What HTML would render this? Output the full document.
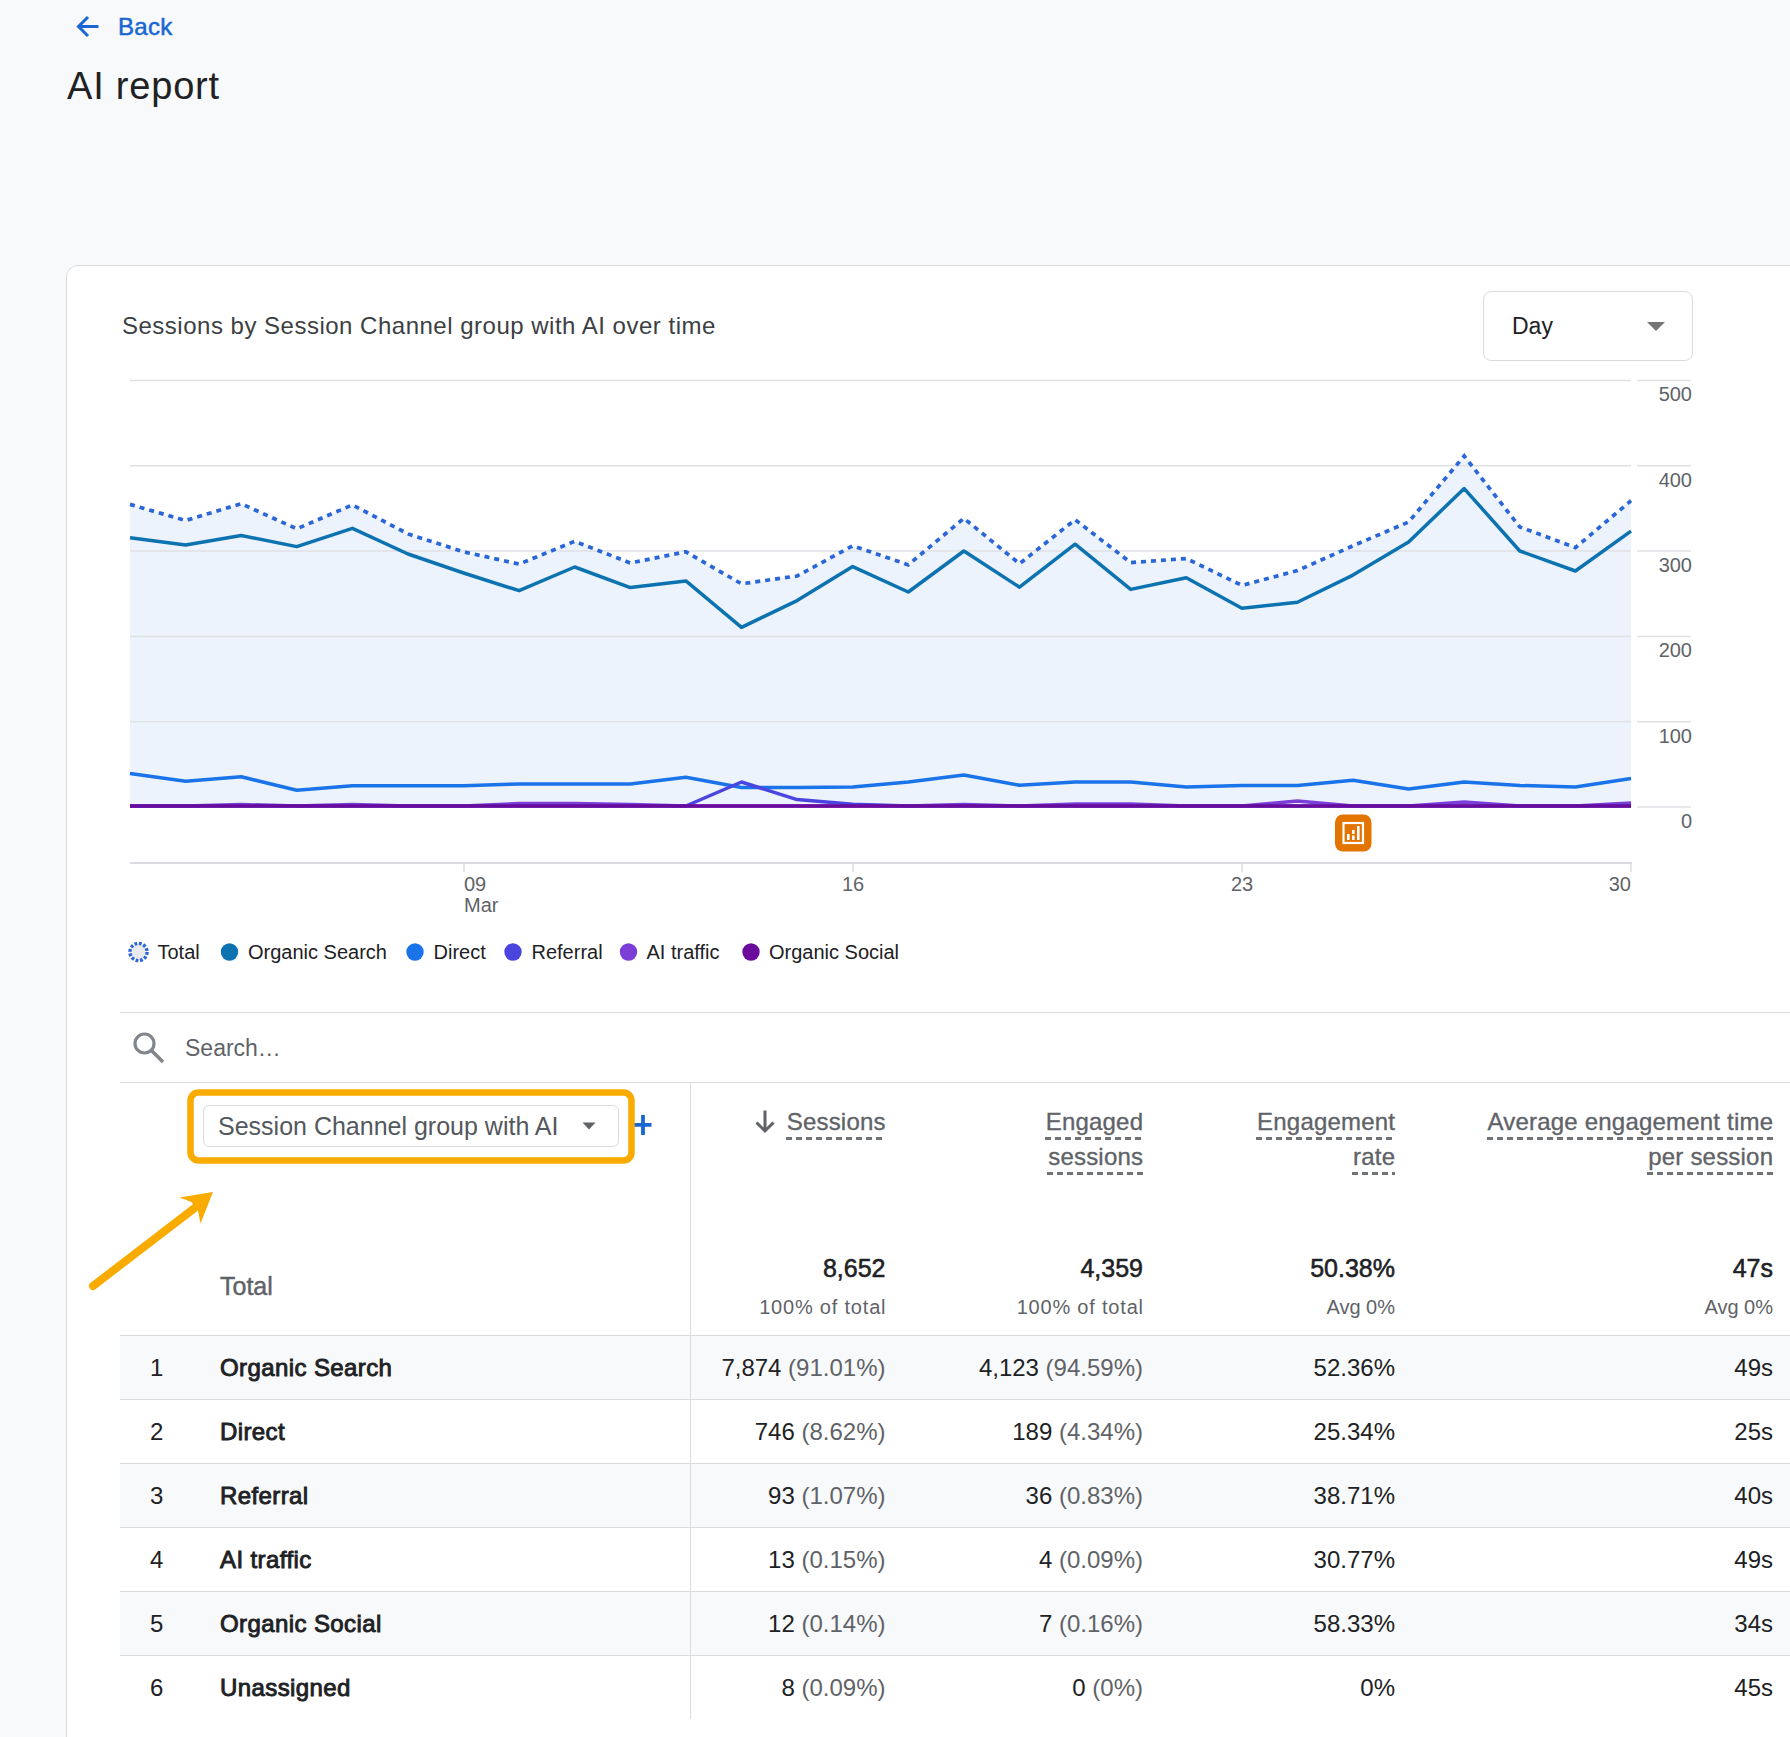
<!DOCTYPE html>
<html><head><meta charset="utf-8">
<style>
html,body{margin:0;padding:0;}
body{width:1790px;height:1737px;overflow:hidden;position:relative;background:#f8f9fa;font-family:"Liberation Sans", sans-serif;}
.t{position:absolute;line-height:1;white-space:nowrap;}
.abs{position:absolute;}
.u{border-bottom:2px dashed #80868b;}
</style></head><body>
<div class="abs" style="left:66px;top:265px;width:1800px;height:1600px;background:#fff;border:1px solid #dadce0;border-radius:12px;box-sizing:border-box;"></div>
<div class="t" style="top:14.7px;font-size:24px;color:#1967d2;font-weight:400;-webkit-text-stroke:0.5px #1967d2;letter-spacing:0.3px;left:118px;">Back</div>
<div class="t" style="top:66.8px;font-size:38px;color:#202124;font-weight:400;letter-spacing:0.8px;left:67px;">AI report</div>
<div class="t" style="top:313.7px;font-size:24px;color:#3c4043;font-weight:400;letter-spacing:0.5px;left:122px;">Sessions by Session Channel group with AI over time</div>
<div class="abs" style="left:1483px;top:291px;width:210px;height:70px;border:1px solid #dadce0;border-radius:8px;box-sizing:border-box;background:#fff;"></div>
<div class="t" style="top:314.5px;font-size:23px;color:#202124;font-weight:400;left:1512px;">Day</div>
<svg class="abs" style="left:0;top:0" width="1790" height="1737" viewBox="0 0 1790 1737">
<polygon points="130.0,807 130.0,504.4 185.6,520.5 241.2,503.7 296.8,528.8 352.4,504.9 408.0,533.9 463.6,551.8 519.1,564.1 574.7,541.3 630.3,563.0 685.9,551.8 741.5,583.8 797.1,576.0 852.7,545.8 908.3,564.8 963.9,518.3 1019.5,563.7 1075.1,519.7 1130.7,562.6 1186.3,558.5 1241.9,585.4 1297.4,570.6 1353.0,545.8 1408.6,522.0 1464.2,456.0 1519.8,527.0 1575.4,547.6 1631.0,500.7 1631.0,807" fill="#edf3fd"/>
<line x1="130" y1="380.5" x2="1631" y2="380.5" stroke="#dfe1e5" stroke-width="1.5"/>
<line x1="1637" y1="380.5" x2="1691" y2="380.5" stroke="#dfe1e5" stroke-width="1.5"/>
<line x1="130" y1="465.8" x2="1631" y2="465.8" stroke="#dfe1e5" stroke-width="1.5"/>
<line x1="1637" y1="465.8" x2="1691" y2="465.8" stroke="#dfe1e5" stroke-width="1.5"/>
<line x1="130" y1="551.1" x2="1631" y2="551.1" stroke="#dfe1e5" stroke-width="1.5"/>
<line x1="1637" y1="551.1" x2="1691" y2="551.1" stroke="#dfe1e5" stroke-width="1.5"/>
<line x1="130" y1="636.4" x2="1631" y2="636.4" stroke="#dfe1e5" stroke-width="1.5"/>
<line x1="1637" y1="636.4" x2="1691" y2="636.4" stroke="#dfe1e5" stroke-width="1.5"/>
<line x1="130" y1="721.7" x2="1631" y2="721.7" stroke="#dfe1e5" stroke-width="1.5"/>
<line x1="1637" y1="721.7" x2="1691" y2="721.7" stroke="#dfe1e5" stroke-width="1.5"/>
<line x1="130" y1="807.0" x2="1631" y2="807.0" stroke="#dfe1e5" stroke-width="1.5"/>
<line x1="1637" y1="807.0" x2="1691" y2="807.0" stroke="#dfe1e5" stroke-width="1.5"/>
<line x1="130" y1="863" x2="1632" y2="863" stroke="#dadce0" stroke-width="2"/>
<line x1="464" y1="863" x2="464" y2="872" stroke="#dadce0" stroke-width="1.5"/>
<line x1="853" y1="863" x2="853" y2="872" stroke="#dadce0" stroke-width="1.5"/>
<line x1="1242" y1="863" x2="1242" y2="872" stroke="#dadce0" stroke-width="1.5"/>
<line x1="1631" y1="863" x2="1631" y2="872" stroke="#dadce0" stroke-width="1.5"/>
<polyline points="130.0,773.5 185.6,781.3 241.2,776.8 296.8,790.2 352.4,785.8 408.0,785.8 463.6,785.8 519.1,784.0 574.7,784.0 630.3,784.0 685.9,777.3 741.5,787.5 797.1,787.5 852.7,786.9 908.3,782.0 963.9,775.0 1019.5,785.3 1075.1,782.0 1130.7,782.0 1186.3,786.9 1241.9,785.5 1297.4,785.5 1353.0,780.2 1408.6,789.0 1464.2,782.0 1519.8,785.5 1575.4,787.1 1631.0,778.6" fill="none" stroke="#1a73e8" stroke-width="3.5" stroke-linejoin="round"/>
<polyline points="130.0,806.0 185.6,806.0 241.2,804.5 296.8,806.0 352.4,804.5 408.0,806.0 463.6,806.0 519.1,803.5 574.7,803.5 630.3,804.5 685.9,806.0 741.5,806.0 797.1,806.0 852.7,806.0 908.3,806.0 963.9,804.5 1019.5,806.0 1075.1,804.0 1130.7,804.0 1186.3,806.0 1241.9,806.0 1297.4,801.0 1353.0,806.0 1408.6,806.0 1464.2,802.0 1519.8,806.0 1575.4,806.0 1631.0,803.0" fill="none" stroke="#7b3fd8" stroke-width="3.5" stroke-linejoin="round"/>
<polyline points="130.0,806.0 185.6,806.0 241.2,806.0 296.8,806.0 352.4,806.0 408.0,806.0 463.6,806.0 519.1,806.0 574.7,806.0 630.3,806.0 685.9,806.0 741.5,782.0 797.1,799.6 852.7,804.3 908.3,806.0 963.9,806.0 1019.5,806.0 1075.1,806.0 1130.7,806.0 1186.3,806.0 1241.9,806.0 1297.4,806.0 1353.0,806.0 1408.6,806.0 1464.2,806.0 1519.8,806.0 1575.4,806.0 1631.0,806.0" fill="none" stroke="#4b45e0" stroke-width="3.5" stroke-linejoin="round"/>
<polyline points="130.0,806.0 185.6,806.0 241.2,806.0 296.8,806.0 352.4,806.0 408.0,806.0 463.6,806.0 519.1,806.0 574.7,806.0 630.3,806.0 685.9,806.0 741.5,806.0 797.1,806.0 852.7,806.0 908.3,806.0 963.9,806.0 1019.5,806.0 1075.1,806.0 1130.7,806.0 1186.3,806.0 1241.9,806.0 1297.4,806.0 1353.0,806.0 1408.6,806.0 1464.2,806.0 1519.8,806.0 1575.4,806.0 1631.0,806.0" fill="none" stroke="#6a0b9c" stroke-width="3.5" stroke-linejoin="round"/>
<polyline points="130.0,537.7 185.6,545.0 241.2,535.5 296.8,546.6 352.4,528.3 408.0,554.0 463.6,573.0 519.1,590.7 574.7,567.0 630.3,587.6 685.9,580.9 741.5,627.4 797.1,600.6 852.7,566.6 908.3,592.0 963.9,551.0 1019.5,587.2 1075.1,544.2 1130.7,589.4 1186.3,577.8 1241.9,608.3 1297.4,602.2 1353.0,575.1 1408.6,541.9 1464.2,488.6 1519.8,551.0 1575.4,571.0 1631.0,531.2" fill="none" stroke="#0c73b0" stroke-width="3.5" stroke-linejoin="round"/>
<polyline points="130.0,504.4 185.6,520.5 241.2,503.7 296.8,528.8 352.4,504.9 408.0,533.9 463.6,551.8 519.1,564.1 574.7,541.3 630.3,563.0 685.9,551.8 741.5,583.8 797.1,576.0 852.7,545.8 908.3,564.8 963.9,518.3 1019.5,563.7 1075.1,519.7 1130.7,562.6 1186.3,558.5 1241.9,585.4 1297.4,570.6 1353.0,545.8 1408.6,522.0 1464.2,456.0 1519.8,527.0 1575.4,547.6 1631.0,500.7" fill="none" stroke="#2a66d8" stroke-width="3.7" stroke-dasharray="5 5"/>
<rect x="1335" y="814.5" width="36.5" height="37" rx="8" fill="#e37400"/>
<rect x="1343.5" y="823" width="19.5" height="20" fill="none" stroke="#fff" stroke-width="2.2"/>
<rect x="1347" y="834" width="2.6" height="6" fill="#fff"/>
<rect x="1352" y="830" width="2.6" height="4" fill="#fff"/>
<rect x="1352" y="835.5" width="2.6" height="4.5" fill="#fff"/>
<rect x="1357" y="826" width="2.6" height="14" fill="#fff"/>
<circle cx="138.5" cy="952" r="8.6" fill="#e8eaed" stroke="#2a66d8" stroke-width="3.4" stroke-dasharray="2.8 1.72"/>
<circle cx="229.5" cy="952" r="8.7" fill="#0c73b0"/>
<circle cx="415" cy="952" r="8.7" fill="#1a73e8"/>
<circle cx="513" cy="952" r="8.7" fill="#4b45e0"/>
<circle cx="628.5" cy="952" r="8.7" fill="#7b3fd8"/>
<circle cx="751" cy="952" r="8.7" fill="#6a0b9c"/>
<path d="M98.5 26.5 H80 M88 17 L78.5 26.5 L88 36" stroke="#1967d2" stroke-width="3" fill="none"/>
</svg>
<div class="t" style="top:384.1px;font-size:20px;color:#5f6368;font-weight:400;right:98.0px;text-align:right;">500</div>
<div class="t" style="top:469.5px;font-size:20px;color:#5f6368;font-weight:400;right:98.0px;text-align:right;">400</div>
<div class="t" style="top:554.9px;font-size:20px;color:#5f6368;font-weight:400;right:98.0px;text-align:right;">300</div>
<div class="t" style="top:640.3px;font-size:20px;color:#5f6368;font-weight:400;right:98.0px;text-align:right;">200</div>
<div class="t" style="top:725.7px;font-size:20px;color:#5f6368;font-weight:400;right:98.0px;text-align:right;">100</div>
<div class="t" style="top:811.1px;font-size:20px;color:#5f6368;font-weight:400;right:98.0px;text-align:right;">0</div>
<div class="t" style="top:874.1px;font-size:20px;color:#5f6368;font-weight:400;left:464px;">09</div>
<div class="t" style="top:895.1px;font-size:20px;color:#5f6368;font-weight:400;left:464px;">Mar</div>
<div class="t" style="top:874.1px;font-size:20px;color:#5f6368;font-weight:400;left:842px;">16</div>
<div class="t" style="top:874.1px;font-size:20px;color:#5f6368;font-weight:400;left:1231px;">23</div>
<div class="t" style="top:874.1px;font-size:20px;color:#5f6368;font-weight:400;right:159.0px;text-align:right;">30</div>
<div class="t" style="top:942.1px;font-size:20px;color:#202124;font-weight:400;left:157.5px;">Total</div>
<div class="t" style="top:942.1px;font-size:20px;color:#202124;font-weight:400;left:248px;">Organic Search</div>
<div class="t" style="top:942.1px;font-size:20px;color:#202124;font-weight:400;left:433.5px;">Direct</div>
<div class="t" style="top:942.1px;font-size:20px;color:#202124;font-weight:400;left:531.5px;">Referral</div>
<div class="t" style="top:942.1px;font-size:20px;color:#202124;font-weight:400;left:646.5px;">AI traffic</div>
<div class="t" style="top:942.1px;font-size:20px;color:#202124;font-weight:400;left:769px;">Organic Social</div>
<div class="abs" style="left:120px;top:1012px;width:1700px;height:1px;background:#dadce0"></div>
<svg class="abs" style="left:125px;top:1025px" width="45" height="45" viewBox="0 0 45 45"><circle cx="19.5" cy="18.5" r="9.5" fill="none" stroke="#80868b" stroke-width="3.2"/><line x1="26.5" y1="25.5" x2="38" y2="37" stroke="#80868b" stroke-width="3.6"/></svg>
<div class="t" style="top:1036.5px;font-size:23px;color:#5f6368;font-weight:400;left:185px;">Search…</div>
<div class="abs" style="left:120px;top:1082px;width:1700px;height:1px;background:#dadce0"></div>
<div class="abs" style="left:120px;top:1335px;width:1700px;height:1px;background:#dadce0"></div>
<div class="abs" style="left:120px;top:1336px;width:1700px;height:63px;background:#f8f9fa"></div>
<div class="abs" style="left:120px;top:1399px;width:1700px;height:1px;background:#dadce0"></div>
<div class="t" style="top:1355.7px;font-size:24px;color:#202124;font-weight:400;left:150px;">1</div>
<div class="t" style="top:1355.7px;font-size:24px;color:#202124;font-weight:400;-webkit-text-stroke:0.9px #202124;letter-spacing:0.4px;left:220px;">Organic Search</div>
<div class="t" style="top:1355.7px;font-size:24px;color:#202124;font-weight:400;right:904.5px;text-align:right;">7,874 <span style="color:#5f6368">(91.01%)</span></div>
<div class="t" style="top:1355.7px;font-size:24px;color:#202124;font-weight:400;right:647.0px;text-align:right;">4,123 <span style="color:#5f6368">(94.59%)</span></div>
<div class="t" style="top:1355.7px;font-size:24px;color:#202124;font-weight:400;right:395.0px;text-align:right;">52.36%</div>
<div class="t" style="top:1355.7px;font-size:24px;color:#202124;font-weight:400;right:17.0px;text-align:right;">49s</div>
<div class="abs" style="left:120px;top:1400px;width:1700px;height:63px;background:#fff"></div>
<div class="abs" style="left:120px;top:1463px;width:1700px;height:1px;background:#dadce0"></div>
<div class="t" style="top:1419.7px;font-size:24px;color:#202124;font-weight:400;left:150px;">2</div>
<div class="t" style="top:1419.7px;font-size:24px;color:#202124;font-weight:400;-webkit-text-stroke:0.9px #202124;letter-spacing:0.4px;left:220px;">Direct</div>
<div class="t" style="top:1419.7px;font-size:24px;color:#202124;font-weight:400;right:904.5px;text-align:right;">746 <span style="color:#5f6368">(8.62%)</span></div>
<div class="t" style="top:1419.7px;font-size:24px;color:#202124;font-weight:400;right:647.0px;text-align:right;">189 <span style="color:#5f6368">(4.34%)</span></div>
<div class="t" style="top:1419.7px;font-size:24px;color:#202124;font-weight:400;right:395.0px;text-align:right;">25.34%</div>
<div class="t" style="top:1419.7px;font-size:24px;color:#202124;font-weight:400;right:17.0px;text-align:right;">25s</div>
<div class="abs" style="left:120px;top:1464px;width:1700px;height:63px;background:#f8f9fa"></div>
<div class="abs" style="left:120px;top:1527px;width:1700px;height:1px;background:#dadce0"></div>
<div class="t" style="top:1483.7px;font-size:24px;color:#202124;font-weight:400;left:150px;">3</div>
<div class="t" style="top:1483.7px;font-size:24px;color:#202124;font-weight:400;-webkit-text-stroke:0.9px #202124;letter-spacing:0.4px;left:220px;">Referral</div>
<div class="t" style="top:1483.7px;font-size:24px;color:#202124;font-weight:400;right:904.5px;text-align:right;">93 <span style="color:#5f6368">(1.07%)</span></div>
<div class="t" style="top:1483.7px;font-size:24px;color:#202124;font-weight:400;right:647.0px;text-align:right;">36 <span style="color:#5f6368">(0.83%)</span></div>
<div class="t" style="top:1483.7px;font-size:24px;color:#202124;font-weight:400;right:395.0px;text-align:right;">38.71%</div>
<div class="t" style="top:1483.7px;font-size:24px;color:#202124;font-weight:400;right:17.0px;text-align:right;">40s</div>
<div class="abs" style="left:120px;top:1528px;width:1700px;height:63px;background:#fff"></div>
<div class="abs" style="left:120px;top:1591px;width:1700px;height:1px;background:#dadce0"></div>
<div class="t" style="top:1547.7px;font-size:24px;color:#202124;font-weight:400;left:150px;">4</div>
<div class="t" style="top:1547.7px;font-size:24px;color:#202124;font-weight:400;-webkit-text-stroke:0.9px #202124;letter-spacing:0.4px;left:220px;">AI traffic</div>
<div class="t" style="top:1547.7px;font-size:24px;color:#202124;font-weight:400;right:904.5px;text-align:right;">13 <span style="color:#5f6368">(0.15%)</span></div>
<div class="t" style="top:1547.7px;font-size:24px;color:#202124;font-weight:400;right:647.0px;text-align:right;">4 <span style="color:#5f6368">(0.09%)</span></div>
<div class="t" style="top:1547.7px;font-size:24px;color:#202124;font-weight:400;right:395.0px;text-align:right;">30.77%</div>
<div class="t" style="top:1547.7px;font-size:24px;color:#202124;font-weight:400;right:17.0px;text-align:right;">49s</div>
<div class="abs" style="left:120px;top:1592px;width:1700px;height:63px;background:#f8f9fa"></div>
<div class="abs" style="left:120px;top:1655px;width:1700px;height:1px;background:#dadce0"></div>
<div class="t" style="top:1611.7px;font-size:24px;color:#202124;font-weight:400;left:150px;">5</div>
<div class="t" style="top:1611.7px;font-size:24px;color:#202124;font-weight:400;-webkit-text-stroke:0.9px #202124;letter-spacing:0.4px;left:220px;">Organic Social</div>
<div class="t" style="top:1611.7px;font-size:24px;color:#202124;font-weight:400;right:904.5px;text-align:right;">12 <span style="color:#5f6368">(0.14%)</span></div>
<div class="t" style="top:1611.7px;font-size:24px;color:#202124;font-weight:400;right:647.0px;text-align:right;">7 <span style="color:#5f6368">(0.16%)</span></div>
<div class="t" style="top:1611.7px;font-size:24px;color:#202124;font-weight:400;right:395.0px;text-align:right;">58.33%</div>
<div class="t" style="top:1611.7px;font-size:24px;color:#202124;font-weight:400;right:17.0px;text-align:right;">34s</div>
<div class="abs" style="left:120px;top:1656px;width:1700px;height:63px;background:#fff"></div>
<div class="t" style="top:1675.7px;font-size:24px;color:#202124;font-weight:400;left:150px;">6</div>
<div class="t" style="top:1675.7px;font-size:24px;color:#202124;font-weight:400;-webkit-text-stroke:0.9px #202124;letter-spacing:0.4px;left:220px;">Unassigned</div>
<div class="t" style="top:1675.7px;font-size:24px;color:#202124;font-weight:400;right:904.5px;text-align:right;">8 <span style="color:#5f6368">(0.09%)</span></div>
<div class="t" style="top:1675.7px;font-size:24px;color:#202124;font-weight:400;right:647.0px;text-align:right;">0 <span style="color:#5f6368">(0%)</span></div>
<div class="t" style="top:1675.7px;font-size:24px;color:#202124;font-weight:400;right:395.0px;text-align:right;">0%</div>
<div class="t" style="top:1675.7px;font-size:24px;color:#202124;font-weight:400;right:17.0px;text-align:right;">45s</div>
<div class="abs" style="left:690px;top:1082px;width:1px;height:637px;background:#dadce0"></div>
<div class="t" style="top:1109.7px;right:904.3px;font-size:24px;color:#5f6368;-webkit-text-stroke:0.35px #5f6368;letter-spacing:0.2px;"><span style="position:relative;display:inline-block;">Sessions<span style="position:absolute;left:-1px;right:-0.2px;top:27.1px;height:3px;background:repeating-linear-gradient(to right,#6f7378 0 6px,transparent 6px 10px);"></span></span></div>
<div class="t" style="top:1109.7px;right:646.8px;font-size:24px;color:#5f6368;-webkit-text-stroke:0.35px #5f6368;letter-spacing:0.2px;"><span style="position:relative;display:inline-block;">Engaged<span style="position:absolute;left:-1px;right:-0.2px;top:27.1px;height:3px;background:repeating-linear-gradient(to right,#6f7378 0 6px,transparent 6px 10px);"></span></span></div>
<div class="t" style="top:1144.7px;right:646.8px;font-size:24px;color:#5f6368;-webkit-text-stroke:0.35px #5f6368;letter-spacing:0.2px;"><span style="position:relative;display:inline-block;">sessions<span style="position:absolute;left:-1px;right:-0.2px;top:27.1px;height:3px;background:repeating-linear-gradient(to right,#6f7378 0 6px,transparent 6px 10px);"></span></span></div>
<div class="t" style="top:1109.7px;right:394.8px;font-size:24px;color:#5f6368;-webkit-text-stroke:0.35px #5f6368;letter-spacing:0.2px;"><span style="position:relative;display:inline-block;">Engagement<span style="position:absolute;left:-1px;right:-0.2px;top:27.1px;height:3px;background:repeating-linear-gradient(to right,#6f7378 0 6px,transparent 6px 10px);"></span></span></div>
<div class="t" style="top:1144.7px;right:394.8px;font-size:24px;color:#5f6368;-webkit-text-stroke:0.35px #5f6368;letter-spacing:0.2px;"><span style="position:relative;display:inline-block;">rate<span style="position:absolute;left:-1px;right:-0.2px;top:27.1px;height:3px;background:repeating-linear-gradient(to right,#6f7378 0 6px,transparent 6px 10px);"></span></span></div>
<div class="t" style="top:1109.7px;right:16.8px;font-size:24px;color:#5f6368;-webkit-text-stroke:0.35px #5f6368;letter-spacing:0.2px;"><span style="position:relative;display:inline-block;">Average engagement time<span style="position:absolute;left:-1px;right:-0.2px;top:27.1px;height:3px;background:repeating-linear-gradient(to right,#6f7378 0 6px,transparent 6px 10px);"></span></span></div>
<div class="t" style="top:1144.7px;right:16.8px;font-size:24px;color:#5f6368;-webkit-text-stroke:0.35px #5f6368;letter-spacing:0.2px;"><span style="position:relative;display:inline-block;">per session<span style="position:absolute;left:-1px;right:-0.2px;top:27.1px;height:3px;background:repeating-linear-gradient(to right,#6f7378 0 6px,transparent 6px 10px);"></span></span></div>
<svg class="abs" style="left:750px;top:1106px" width="30" height="30" viewBox="0 0 30 30"><path d="M15 4.5 V25 M6.5 16.5 L15 25 L23.5 16.5" stroke="#5f6368" stroke-width="3" fill="none"/></svg>
<div class="t" style="top:1273.8px;font-size:25px;color:#5f6368;font-weight:400;-webkit-text-stroke:0.45px #5f6368;left:220px;">Total</div>
<div class="t" style="top:1255.8px;font-size:25px;color:#202124;font-weight:400;-webkit-text-stroke:0.55px #202124;right:904.5px;text-align:right;">8,652</div>
<div class="t" style="top:1297.1px;font-size:20px;color:#5f6368;font-weight:400;letter-spacing:0.8px;right:903.7px;text-align:right;">100% of total</div>
<div class="t" style="top:1255.8px;font-size:25px;color:#202124;font-weight:400;-webkit-text-stroke:0.55px #202124;right:647.0px;text-align:right;">4,359</div>
<div class="t" style="top:1297.1px;font-size:20px;color:#5f6368;font-weight:400;letter-spacing:0.8px;right:646.2px;text-align:right;">100% of total</div>
<div class="t" style="top:1255.8px;font-size:25px;color:#202124;font-weight:400;-webkit-text-stroke:0.55px #202124;right:395.0px;text-align:right;">50.38%</div>
<div class="t" style="top:1297.1px;font-size:20px;color:#5f6368;font-weight:400;right:395.0px;text-align:right;">Avg 0%</div>
<div class="t" style="top:1255.8px;font-size:25px;color:#202124;font-weight:400;-webkit-text-stroke:0.55px #202124;right:17.0px;text-align:right;">47s</div>
<div class="t" style="top:1297.1px;font-size:20px;color:#5f6368;font-weight:400;right:17.0px;text-align:right;">Avg 0%</div>
<div class="abs" style="left:203px;top:1105px;width:416px;height:42px;border:1px solid #dadce0;border-radius:6px;box-sizing:border-box;background:#fff"></div>
<div class="t" style="top:1113.8px;font-size:25px;color:#54585d;font-weight:400;left:218px;">Session Channel group with AI</div>
<svg class="abs" style="left:0;top:0" width="1790" height="1737" viewBox="0 0 1790 1737"><path d="M582.5 1122.5 L595.5 1122.5 L589 1129.5 Z" fill="#5f6368"/><path d="M1647 322 L1665 322 L1656 331 Z" fill="#757575"/><path d="M643 1115 V1135 M633 1124.8 H651.5" stroke="#1967d2" stroke-width="3.8"/><rect x="190.5" y="1092.5" width="441" height="68" rx="8" fill="none" stroke="#f9ab00" stroke-width="6.5"/><path d="M93 1286 L196 1207" stroke="#f9ab00" stroke-width="8" stroke-linecap="round"/><path d="M213 1192 L179.5 1197.5 L191.5 1202 L198 1210.5 L200.5 1223.5 Z" fill="#f9ab00"/></svg>
</body></html>
